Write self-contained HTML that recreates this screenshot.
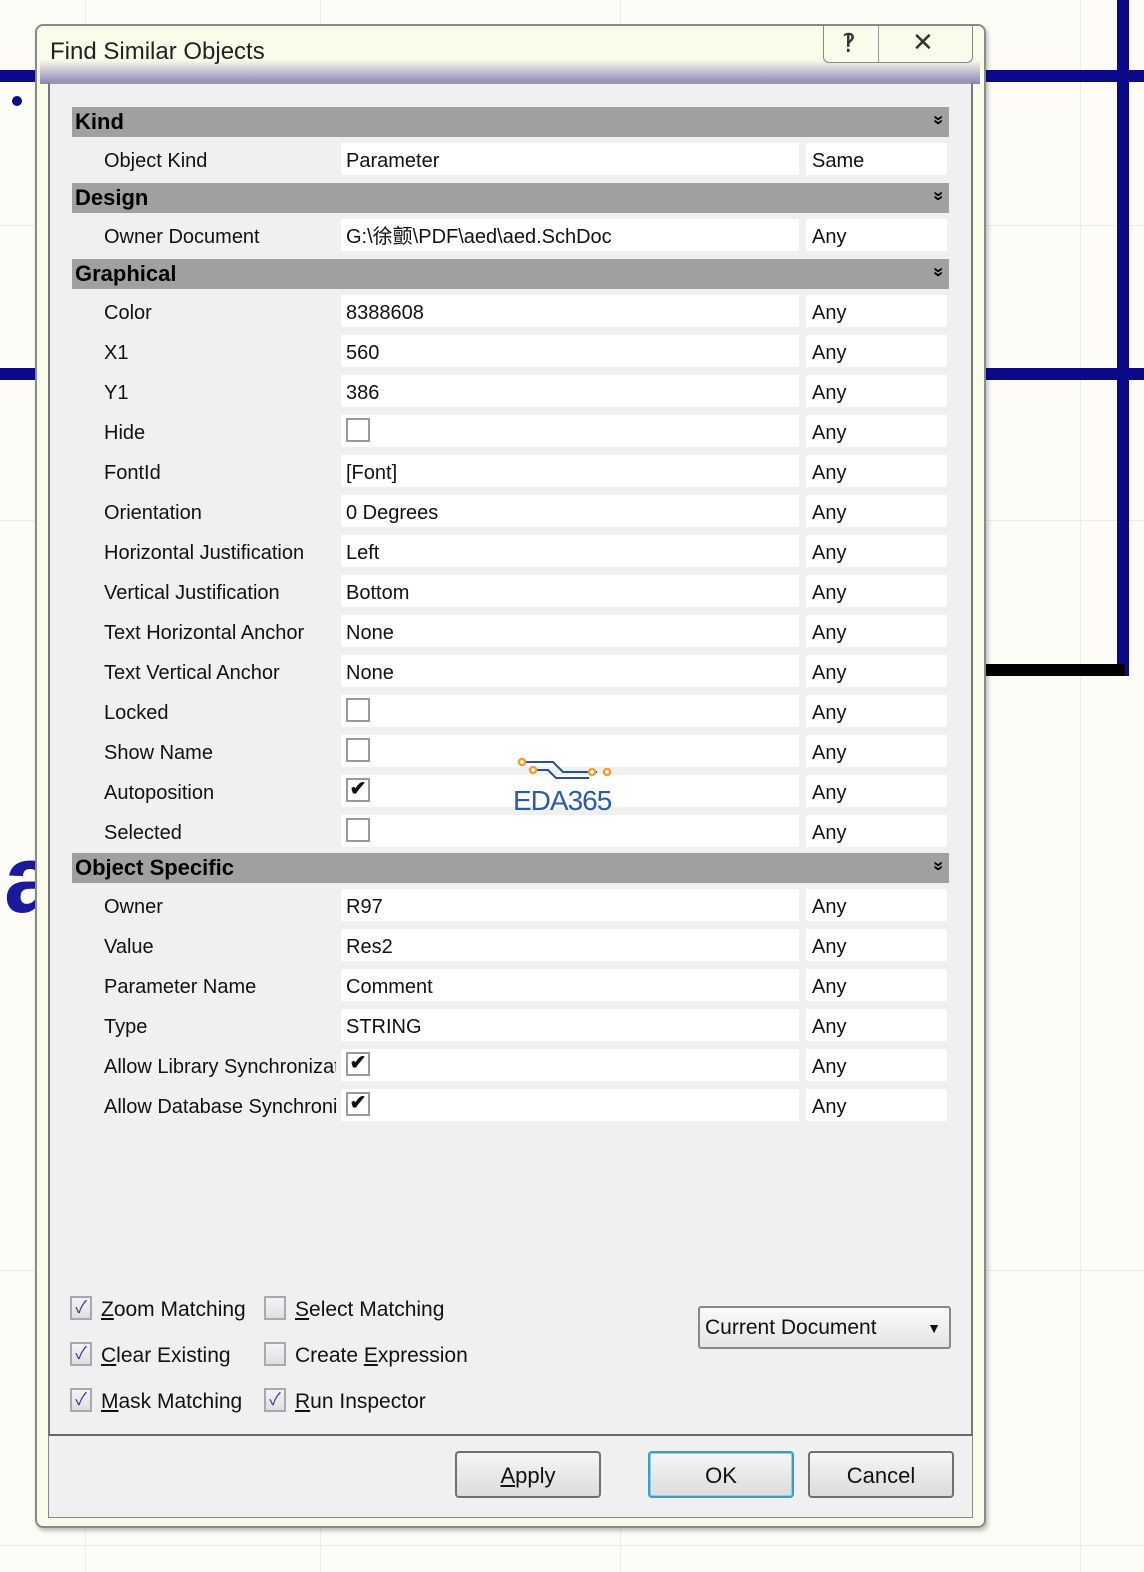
<!DOCTYPE html>
<html><head><meta charset="utf-8"><style>
*{margin:0;padding:0;box-sizing:border-box}
body{width:1144px;height:1572px;position:relative;overflow:hidden;background:#fdfcf6;font-family:"Liberation Sans","Noto Sans CJK SC",sans-serif;color:#111}
.a{position:absolute}
.gh{position:absolute;left:0;width:1144px;height:1px;background:#eeece2}
.gv{position:absolute;top:0;height:1572px;width:1px;background:#eeece2}
.hdr{position:absolute;left:72px;width:877px;height:30px;background:#a0a0a0;font-weight:bold;font-size:22px;line-height:30px;padding-left:3px;color:#000}
.hdr:after{content:"\00BB";position:absolute;right:5px;top:-2px;font-size:18px;transform:rotate(90deg);font-weight:bold}
.lab{position:absolute;left:104px;font-size:20px;line-height:36px;white-space:nowrap;overflow:hidden;width:232px}
.val{position:absolute;left:341px;width:458px;height:32px;background:#fff;font-size:20px;line-height:36px;padding-left:5px}
.any{position:absolute;left:806px;width:141px;height:32px;background:#fff;font-size:20px;line-height:36px;padding-left:6px}
.cb{position:absolute;left:346px;width:24px;height:24px;border:2px solid #9a9a9a;background:#fff;font-size:20px;line-height:18px;text-align:center;font-weight:bold}
.ck{position:absolute;width:22px;height:24px;border:2px solid #a8a8b0;background:linear-gradient(#f4f4f4,#e0e0e4);color:#2a3a9a;font-size:17px;line-height:20px;text-align:center}
.opt{position:absolute;font-size:21px;line-height:32px;white-space:nowrap}
.btn{position:absolute;top:1451px;width:146px;height:47px;border:2px solid #707070;border-radius:4px;background:linear-gradient(#f6f6f6,#dcdcdc);font-size:22px;line-height:45px;text-align:center}
</style></head><body>
<div class="gv" style="left:320px"></div><div class="gv" style="left:620px"></div><div class="gv" style="left:1080px"></div><div class="gv" style="left:85px"></div>
<div class="gh" style="top:225px"></div><div class="gh" style="top:520px"></div><div class="gh" style="top:1270px"></div><div class="gh" style="top:1545px"></div>
<div class="a" style="left:0;top:70px;width:1144px;height:12px;background:#0a0a8a"></div>
<div class="a" style="left:0;top:368px;width:1144px;height:12px;background:#0a0a8a"></div>
<div class="a" style="left:1117px;top:0;width:12px;height:676px;background:#0a0a8a"></div>
<div class="a" style="left:985px;top:664px;width:140px;height:12px;background:#000"></div>
<div class="a" style="left:12px;top:96px;width:10px;height:10px;border-radius:50%;background:#0a0a8a"></div>
<div class="a" style="left:4px;top:830px;font-size:96px;font-weight:bold;color:#1a1a9a;line-height:100px">a</div>
<!-- dialog -->
<div class="a" style="left:35px;top:24px;width:951px;height:1504px;background:#fbfbea;border:2px solid #8a8a8a;border-radius:8px;box-shadow:2px 3px 4px rgba(0,0,0,.25)"></div>
<div class="a" style="left:40px;top:60px;width:940px;height:24px;background:linear-gradient(rgba(251,251,234,0),rgba(110,100,170,.8))"></div>
<div class="a" style="left:50px;top:38px;font-size:24px;color:#222">Find Similar Objects</div>
<div class="a" style="left:823px;top:26px;width:150px;height:37px;border:1px solid #888;border-top:none;border-radius:0 0 6px 6px;background:#fbfbec"></div>
<div class="a" style="left:878px;top:26px;width:1px;height:36px;background:#999"></div>
<div class="a" style="left:842px;top:28px;font-size:26px;color:#333">&#8253;</div>
<div class="a" style="left:912px;top:27px;font-size:26px;color:#333">&#10005;</div>
<div class="a" style="left:48px;top:82px;width:925px;height:1354px;background:#f0f0f0;border:2px solid #777;border-top:2px solid #9a9a9a"></div>
<div class="a" style="left:48px;top:1434px;width:925px;height:84px;background:#f0f0f0;border:1px solid #888;border-top:2px solid #666"></div>

<div class="hdr" style="top:107px">Kind</div>
<div class="lab" style="top:143px">Object Kind</div><div class="val" style="top:143px">Parameter</div><div class="any" style="top:143px">Same</div>
<div class="hdr" style="top:183px">Design</div>
<div class="lab" style="top:219px">Owner Document</div><div class="val" style="top:219px">G:\徐颤\PDF\aed\aed.SchDoc</div><div class="any" style="top:219px">Any</div>
<div class="hdr" style="top:259px">Graphical</div>

<div class="lab" style="top:295px">Color</div><div class="val" style="top:295px">8388608</div><div class="any" style="top:295px">Any</div>
<div class="lab" style="top:335px">X1</div><div class="val" style="top:335px">560</div><div class="any" style="top:335px">Any</div>
<div class="lab" style="top:375px">Y1</div><div class="val" style="top:375px">386</div><div class="any" style="top:375px">Any</div>
<div class="lab" style="top:415px">Hide</div><div class="val" style="top:415px"></div><div class="cb" style="top:418px"></div><div class="any" style="top:415px">Any</div>
<div class="lab" style="top:455px">FontId</div><div class="val" style="top:455px">[Font]</div><div class="any" style="top:455px">Any</div>
<div class="lab" style="top:495px">Orientation</div><div class="val" style="top:495px">0 Degrees</div><div class="any" style="top:495px">Any</div>
<div class="lab" style="top:535px">Horizontal Justification</div><div class="val" style="top:535px">Left</div><div class="any" style="top:535px">Any</div>
<div class="lab" style="top:575px">Vertical Justification</div><div class="val" style="top:575px">Bottom</div><div class="any" style="top:575px">Any</div>
<div class="lab" style="top:615px">Text Horizontal Anchor</div><div class="val" style="top:615px">None</div><div class="any" style="top:615px">Any</div>
<div class="lab" style="top:655px">Text Vertical Anchor</div><div class="val" style="top:655px">None</div><div class="any" style="top:655px">Any</div>
<div class="lab" style="top:695px">Locked</div><div class="val" style="top:695px"></div><div class="cb" style="top:698px"></div><div class="any" style="top:695px">Any</div>
<div class="lab" style="top:735px">Show Name</div><div class="val" style="top:735px"></div><div class="cb" style="top:738px"></div><div class="any" style="top:735px">Any</div>
<div class="lab" style="top:775px">Autoposition</div><div class="val" style="top:775px"></div><div class="cb" style="top:778px">&#10004;</div><div class="any" style="top:775px">Any</div>
<div class="lab" style="top:815px">Selected</div><div class="val" style="top:815px"></div><div class="cb" style="top:818px"></div><div class="any" style="top:815px">Any</div>

<div class="hdr" style="top:853px">Object Specific</div>
<div class="lab" style="top:889px">Owner</div><div class="val" style="top:889px">R97</div><div class="any" style="top:889px">Any</div>
<div class="lab" style="top:929px">Value</div><div class="val" style="top:929px">Res2</div><div class="any" style="top:929px">Any</div>
<div class="lab" style="top:969px">Parameter Name</div><div class="val" style="top:969px">Comment</div><div class="any" style="top:969px">Any</div>
<div class="lab" style="top:1009px">Type</div><div class="val" style="top:1009px">STRING</div><div class="any" style="top:1009px">Any</div>
<div class="lab" style="top:1049px">Allow Library Synchronization</div><div class="val" style="top:1049px"></div><div class="cb" style="top:1052px">&#10004;</div><div class="any" style="top:1049px">Any</div>
<div class="lab" style="top:1089px">Allow Database Synchronization</div><div class="val" style="top:1089px"></div><div class="cb" style="top:1092px">&#10004;</div><div class="any" style="top:1089px">Any</div>

<!-- watermark -->
<svg class="a" style="left:515px;top:755px" width="100" height="30"><path d="M8 7H38L48 17H82M20 15H33L41 23H74" stroke="#2a4fa0" stroke-width="2" fill="none"/><g fill="#fff" stroke="#f0a030" stroke-width="2.5"><circle cx="7" cy="7" r="3"/><circle cx="18" cy="15" r="3"/><circle cx="77" cy="17" r="3"/><circle cx="92" cy="17" r="3"/></g></svg>
<div class="a" style="left:513px;top:785px;font-size:28px;color:#2a5ab0;letter-spacing:-1px">EDA365</div>

<div class="ck" style="left:70px;top:1296px">&#10003;</div><div class="opt" style="left:101px;top:1294px"><u>Z</u>oom Matching</div>
<div class="ck" style="left:264px;top:1296px"></div><div class="opt" style="left:295px;top:1294px"><u>S</u>elect Matching</div>
<div class="ck" style="left:70px;top:1342px">&#10003;</div><div class="opt" style="left:101px;top:1340px"><u>C</u>lear Existing</div>
<div class="ck" style="left:264px;top:1342px"></div><div class="opt" style="left:295px;top:1340px">Create <u>E</u>xpression</div>
<div class="ck" style="left:70px;top:1388px">&#10003;</div><div class="opt" style="left:101px;top:1386px"><u>M</u>ask Matching</div>
<div class="ck" style="left:264px;top:1388px">&#10003;</div><div class="opt" style="left:295px;top:1386px"><u>R</u>un Inspector</div>

<div class="a" style="left:698px;top:1306px;width:253px;height:43px;border:2px solid #888;border-radius:3px;background:linear-gradient(#fafafa,#e4e4e4);font-size:21px;line-height:40px;padding-left:5px">Current Document<span style="position:absolute;right:8px;top:0;font-size:14px">&#9660;</span></div>

<div class="btn" style="left:455px"><u>A</u>pply</div>
<div class="btn" style="left:648px;border-color:#3c9cc8;box-shadow:inset 0 0 0 1px #8fd0ee">OK</div>
<div class="btn" style="left:808px">Cancel</div>
</body></html>
